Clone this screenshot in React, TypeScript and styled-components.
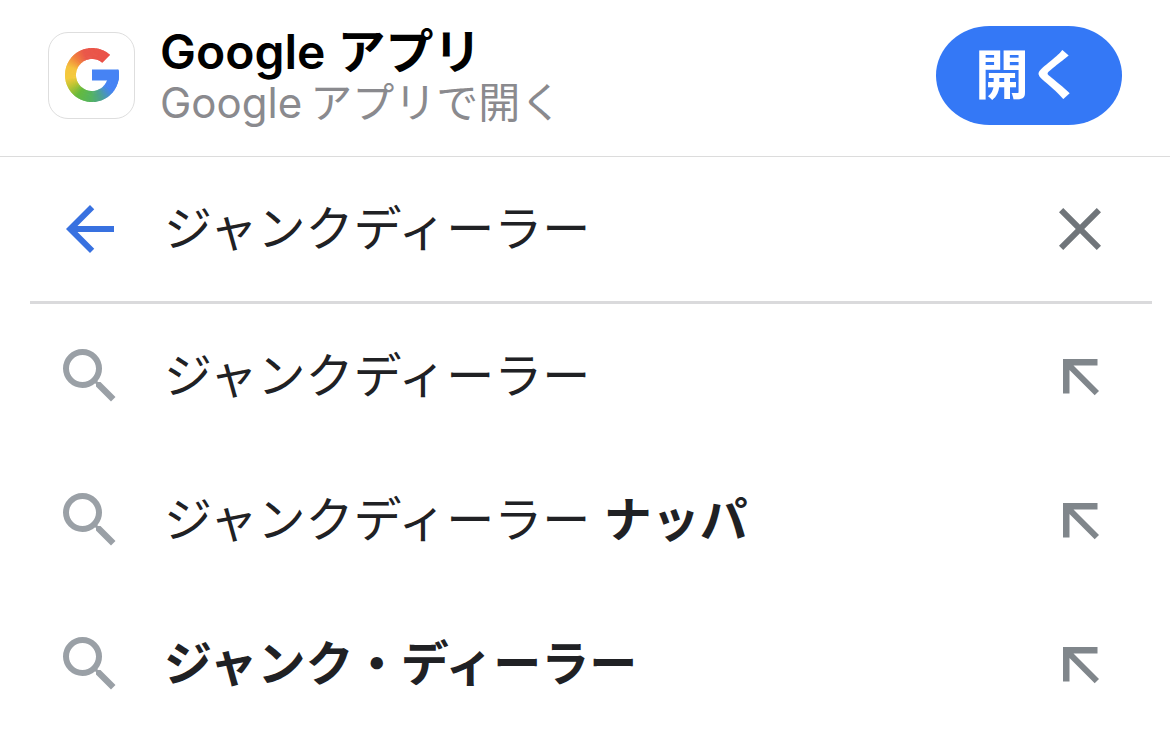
import React, { useState } from "react";
import styled, { createGlobalStyle } from "styled-components";

const fontStack = 'Inter, "Noto Sans CJK JP", sans-serif';

const GlobalStyle = createGlobalStyle`
  *, *::before, *::after { box-sizing: border-box; }
  body {
    margin: 0;
    background: #fff;
    color: #202124;
    font-family: ${fontStack};
  }
`;

const Banner = styled.header`
  display: flex;
  align-items: center;
  gap: 25px;
  padding: 23px 48px 28px;
  border-bottom: 1px solid #dcdcdc;
`;

const AppIcon = styled.div`
  flex: none;
  width: 87px;
  height: 87px;
  border: 1px solid #dedede;
  border-radius: 20px;
  overflow: hidden;

  svg { display: block; width: 100%; height: 100%; }
`;

const BannerText = styled.div`
  flex: 1;
  min-width: 0;
  padding-top: 3px;
  color: #000;
`;

const Title = styled.h1`
  margin: 0;
  font-size: 48px;
  font-weight: 600;
  line-height: 52px;
`;

const Subtitle = styled.p`
  margin: 0;
  color: #8a8a8e;
  font-size: 42px;
  line-height: 50px;
`;

const LatinWord = styled.span`
  margin-right: 8px;
`;

const OpenButton = styled.button`
  flex: none;
  height: 99px;
  padding: 0 39px;
  border: 0;
  border-radius: 54px / 50px;
  background: #3478f6;
  color: #fff;
  font: 600 54px/99px ${fontStack};
  cursor: pointer;
`;

const Panel = styled.main`
  margin: 0 18px 0 30px;
`;

const Row = styled.div`
  display: flex;
  align-items: center;
  height: 144px;
  padding: 0 36px 0 24px;
`;

const SearchForm = styled(Row).attrs({ as: "form" })`
  height: 147px;
  border-bottom: 3px solid #dadadc;
`;

const SearchInput = styled.input`
  flex: 1;
  min-width: 0;
  height: 72px;
  margin: 0 38px;
  padding: 0;
  border: 0;
  outline: 0;
  background: transparent;
  color: #202124;
  font: 400 48px/72px ${fontStack};
`;

const IconButton = styled.button<{ $color: string }>`
  flex: none;
  padding: 0;
  border: 0;
  background: none;
  color: ${(p) => p.$color};
  cursor: pointer;
`;

const Icon = styled.svg`
  display: block;
  flex: none;
  width: 72px;
  height: 72px;
  fill: currentColor;
`;

const List = styled.ul`
  margin: 0;
  padding: 0;
  list-style: none;
`;

const Suggestion = styled.a`
  display: flex;
  flex: 1;
  align-items: center;
  gap: 38px;
  min-width: 0;
  color: #9aa0a6;
  text-decoration: none;
`;

const SuggestionText = styled.span`
  color: #202124;
  font: 400 48px/72px ${fontStack};
  white-space: nowrap;

  b { font-weight: 700; }
`;

type Stop = [number, number, number, number];

// Angle in degrees clockwise from the right, followed by the RGB colour there.
const ringStops: Stop[] = [
  [-14, 70, 131, 244],
  [38, 70, 131, 244],
  [66, 76, 160, 150],
  [92, 84, 180, 96],
  [125, 100, 186, 62],
  [152, 190, 196, 50],
  [172, 244, 202, 60],
  [198, 245, 196, 62],
  [225, 241, 130, 62],
  [250, 234, 88, 74],
  [326, 234, 80, 72],
];

function ringColor(angle: number) {
  const i = Math.max(1, ringStops.findIndex((s) => s[0] >= angle));
  const a = ringStops[i - 1];
  const b = ringStops[i];
  const t = (angle - a[0]) / (b[0] - a[0]);
  const mix = (k: number) => Math.round(a[k] + (b[k] - a[k]) * t);
  return `rgb(${mix(1)}, ${mix(2)}, ${mix(3)})`;
}

function slicePath(from: number, to: number, radius: number) {
  const point = (deg: number) => {
    const rad = (deg * Math.PI) / 180;
    return `${(radius * Math.cos(rad)).toFixed(3)} ${(radius * Math.sin(rad)).toFixed(3)}`;
  };
  return `M${point(from)}A${radius} ${radius} 0 0 1 ${point(to)}`;
}

const GoogleLogo = () => {
  const slices = [];
  for (let a = -12; a < 321; a += 3) {
    slices.push(
      <path key={a} d={slicePath(a, a + 5, 21.5)} stroke={ringColor(a + 1)} />
    );
  }
  return (
    <svg viewBox="-43 -42 85 85" role="img" aria-label="Google">
      <clipPath id="g-opening">
        <path d="M-30 -30H28L3.500 -5.500H30V30H-30Z" />
      </clipPath>
      <clipPath id="g-disc">
        <circle r="27" />
      </clipPath>
      <g clipPath="url(#g-opening)" fill="none" strokeWidth="11">
        {slices}
      </g>
      <rect x="0" y="-5.500" width="28" height="11" fill="#4683f4" clipPath="url(#g-disc)" />
    </svg>
  );
};

const BackIcon = () => (
  <Icon viewBox="0 0 24 24" aria-hidden="true">
    <path d="M20 11H7.830l5.590-5.590L12 4l-8 8 8 8 1.410-1.410L7.830 13H20v-2z" />
  </Icon>
);

const ClearIcon = () => (
  <Icon viewBox="0 0 24 24" aria-hidden="true">
    <path d="M19 6.410L17.590 5 12 10.590 6.410 5 5 6.410 10.590 12 5 17.590 6.410 19 12 13.410 17.590 19 19 17.590 13.410 12z" />
  </Icon>
);

const SearchIcon = () => (
  <Icon viewBox="0 0 24 24" aria-hidden="true">
    <path d="M15.500 14h-.790l-.280-.270A6.471 6.471 0 0 0 16 9.500 6.500 6.500 0 1 0 9.500 16c1.610 0 3.090-.590 4.230-1.570l.270.280v.790l5 4.990L20.490 19l-4.990-5zm-6 0C7.010 14 5 11.990 5 9.500S7.010 5 9.500 5 14 7.010 14 9.500 11.990 14 9.500 14z" />
  </Icon>
);

const InsertIcon = () => (
  <Icon viewBox="0 0 72 72" aria-hidden="true">
    <path d="M19 19H53.500V25.500H29.500L55 51L50.700 55.300L25.500 30V53.500H19Z" />
  </Icon>
);

const suggestions = [
  { plain: "ジャンクディーラー", strong: "" },
  { plain: "ジャンクディーラー ", strong: "ナッパ" },
  { plain: "", strong: "ジャンク・ディーラー" },
];

export default function App() {
  const [query, setQuery] = useState("ジャンクディーラー");

  return (
    <>
      <GlobalStyle />
      <Banner>
        <AppIcon>
          <GoogleLogo />
        </AppIcon>
        <BannerText>
          <Title>Google アプリ</Title>
          <Subtitle>
            <LatinWord>Google</LatinWord>アプリで開く
          </Subtitle>
        </BannerText>
        <OpenButton type="button">開く</OpenButton>
      </Banner>
      <Panel>
        <SearchForm onSubmit={(e: React.FormEvent) => e.preventDefault()}>
          <IconButton type="button" $color="#3871e0" aria-label="戻る">
            <BackIcon />
          </IconButton>
          <SearchInput
            type="text"
            aria-label="検索"
            value={query}
            onChange={(e) => setQuery(e.target.value)}
          />
          <IconButton type="button" $color="#70757a" aria-label="クリア" onClick={() => setQuery("")}>
            <ClearIcon />
          </IconButton>
        </SearchForm>
        <List>
          {suggestions.map(({ plain, strong }) => (
            <Row as="li" key={plain + strong}>
              <Suggestion href="#">
                <SearchIcon />
                <SuggestionText>
                  {plain}
                  {strong && <b>{strong}</b>}
                </SuggestionText>
              </Suggestion>
              <IconButton
                type="button"
                $color="#80868b"
                aria-label={`${plain}${strong}を入力`}
                onClick={() => setQuery(plain + strong)}
              >
                <InsertIcon />
              </IconButton>
            </Row>
          ))}
        </List>
      </Panel>
    </>
  );
}
